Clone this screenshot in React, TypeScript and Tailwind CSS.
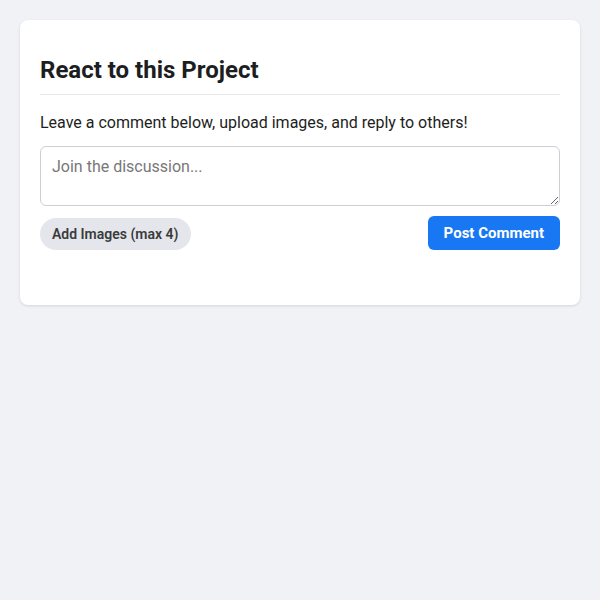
export default function App() {
  return (
    <div className="min-h-[600px] w-full bg-[#f0f2f5] p-5" style={{ fontFamily: 'Roboto, "Liberation Sans", sans-serif' }}>
      <div className="rounded-lg bg-white px-5 pt-9 pb-[55px] shadow-[0_1px_3px_rgba(0,0,0,0.12)]">
        <h2 className="border-b border-[#e4e6eb] pb-[10px] text-[24px] leading-[28px] font-bold text-[#1c1e21]">
          React to this Project
        </h2>
        <p className="mt-4 text-[16px] leading-6 text-[#1c1e21]">
          Leave a comment below, upload images, and reply to others!
        </p>
        <textarea
          className="mt-[11px] block h-[60px] w-full rounded-md border border-[#ccd0d5] bg-white px-[11px] py-[10px] text-[16px] leading-[normal] text-[#1c1e21] placeholder:text-[#777] outline-none"
          placeholder="Join the discussion..."
        />
        <div className="mt-[10px] flex items-end justify-between">
          <button className="h-8 rounded-full bg-[#e4e6eb] px-3 text-[14px] font-semibold text-[#3a3b3c]">
            Add Images (max 4)
          </button>
          <button className="h-[34px] rounded-md bg-[#1877f2] px-4 text-[15px] font-bold text-white">
            Post Comment
          </button>
        </div>
      </div>
    </div>
  );
}
